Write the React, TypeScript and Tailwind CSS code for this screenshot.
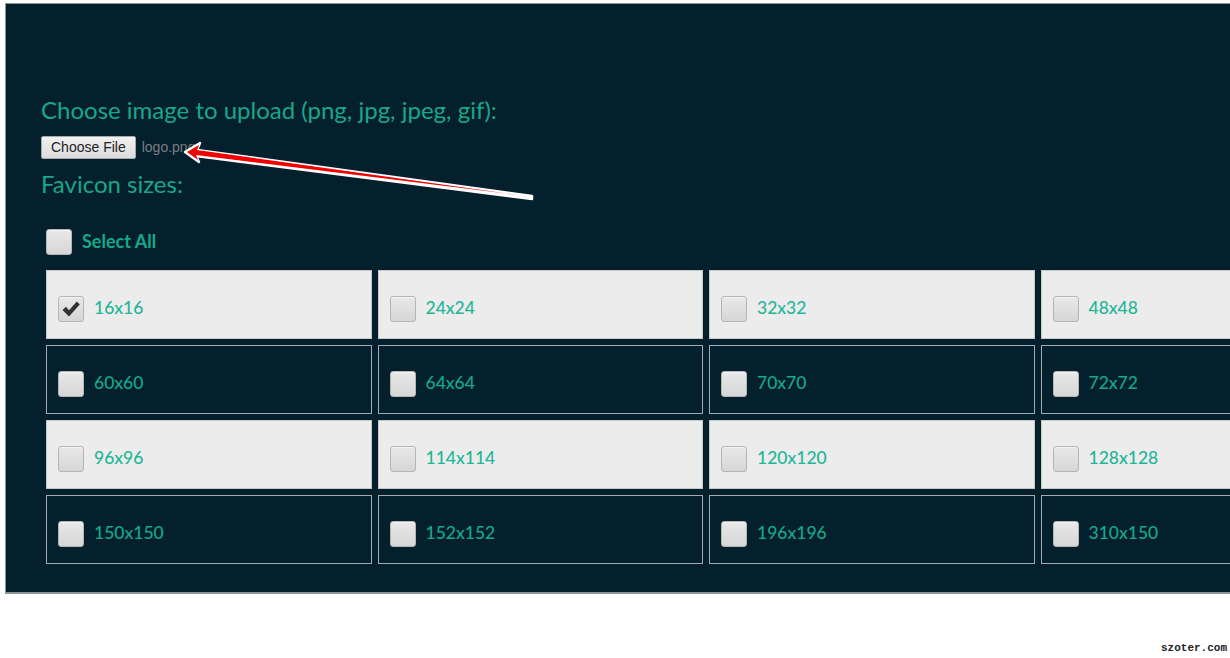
import React from "react";

const sizes = [
  "16x16", "24x24", "32x32", "48x48",
  "60x60", "64x64", "70x70", "72x72",
  "96x96", "114x114", "120x120", "128x128",
  "150x150", "152x152", "196x196", "310x150",
];

const Box = ({ checked }: { checked?: boolean }) => (
  <span className="flex h-[26px] w-[26px] shrink-0 items-center justify-center rounded-[3px] border border-[#b5b5b5] bg-linear-to-b from-[#e8e8e8] to-[#d6d6d6] shadow-[inset_0_1px_0_#f4f4f4]">
    {checked && (
      <svg width="20" height="18" viewBox="0 0 20 18">
        <path d="M1.5 10 L5 6.8 L8 10.3 L15.8 1.5 L18.8 4.5 L8 16.5 Z" fill="#333" />
      </svg>
    )}
  </span>
);

const Cell = ({ label, light, checked }: { label: string; light: boolean; checked?: boolean }) => (
  <div
    className={
      "flex h-[69px] items-center gap-[10px] border pl-[11px] pt-[8px] " +
      (light ? "border-[#c8c8c8] bg-[#ececec]" : "border-[#a3abae] bg-[#03202c]")
    }
  >
    <Box checked={checked} />
    <span className={"text-[17.5px] font-medium " + (light ? "text-[#1eb697]" : "text-[#17a88a]")}>{label}</span>
  </div>
);

const Arrow = () => (
  <svg className="absolute left-0 top-0" width="560" height="220" viewBox="0 0 560 220">
    <polygon points="185,152 200,143 197,150 532,196 532,199 196,156 199,162" fill="#ffffff" stroke="#ffffff" strokeWidth="2.5" strokeLinejoin="round" />
    <polygon points="187,152 199,145 197,150 518,195 196,155 198,160" fill="#f00000" />
  </svg>
);

const App = () => {
  return (
    <div className="relative h-[658px] w-[1230px] overflow-hidden bg-white font-['Lato',sans-serif]">
      <section className="ml-[5px] mt-[3px] w-[1400px] border-t border-b-2 border-l border-[#8a9499] bg-[#03202c] pb-[28px] pl-[35px] pt-[91px]">
        <h2 className="text-[24px] leading-[30px] text-[#1aa68a]">
          Choose image to upload (png, jpg, jpeg, gif):
        </h2>
        <div className="mt-[11px] flex items-center gap-[6px]">
          <button className="h-[23px] rounded-[2px] border border-[#a9a9a9] bg-linear-to-b from-[#f1f1f1] to-[#dcdcdc] px-[9px] font-['Liberation_Sans',sans-serif] text-[14px] text-[#222]">
            Choose File
          </button>
          <span className="font-['Liberation_Sans',sans-serif] text-[14px] text-[#7a7f82]">logo.png</span>
        </div>
        <h3 className="mt-[10px] text-[24px] leading-[30px] text-[#1aa68a]">Favicon sizes:</h3>
        <label className="mt-[29px] ml-[5px] flex items-center gap-[10px]">
          <Box />
          <span className="text-[18px] font-bold text-[#17a88a]">Select All</span>
        </label>
        <div className="mt-[15px] ml-[5px] grid w-[1320px] grid-cols-4 gap-x-[6px] gap-y-[6px]">
          {sizes.map((s, i) => (
            <Cell key={s} label={s} light={Math.floor(i / 4) % 2 === 0} checked={i === 0} />
          ))}
        </div>
      </section>
      <Arrow />
      <div className="absolute bottom-[2px] right-[3px] font-['Liberation_Mono',monospace] text-[11px] font-bold text-[#222]">
        szoter.com
      </div>
    </div>
  );
};

export default App;
